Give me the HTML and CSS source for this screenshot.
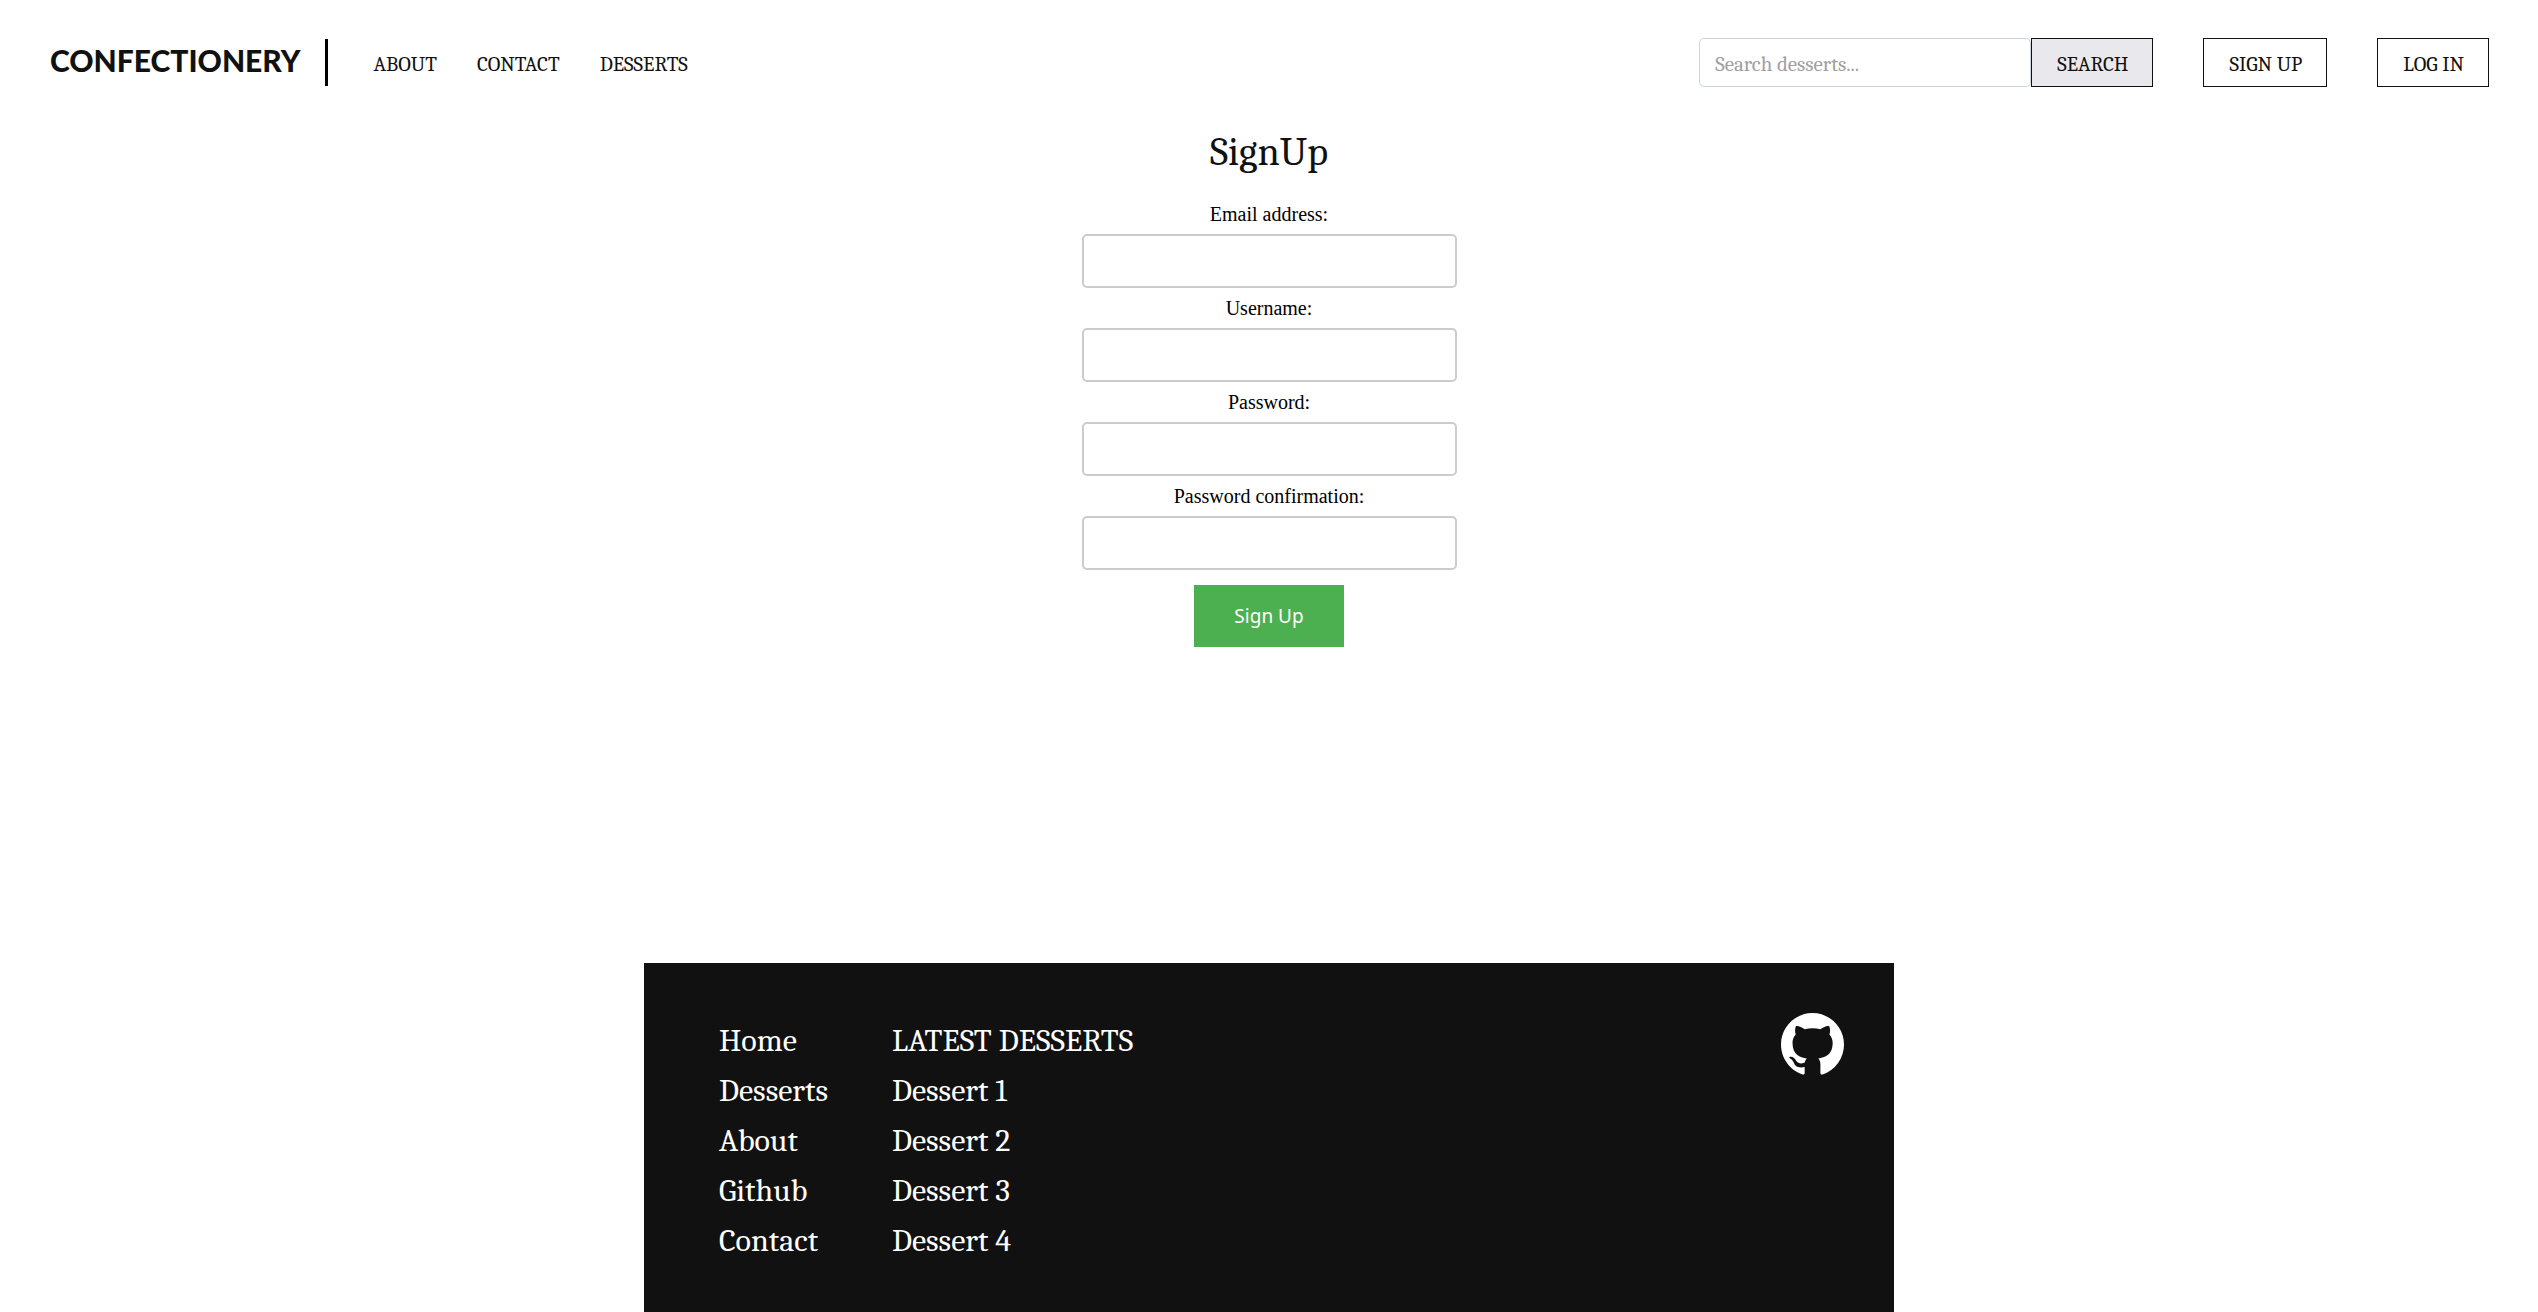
FILE: index.html
```html
<!DOCTYPE html>
<html lang="en">
<head>
<meta charset="utf-8">
<title>Confectionery</title>
<link rel="stylesheet" href="styles.css">
</head>
<body>
<header class="header">
  <a class="logo" href="#">CONFECTIONERY</a>
  <nav class="nav">
    <a href="#">ABOUT</a>
    <a href="#">CONTACT</a>
    <a href="#">DESSERTS</a>
  </nav>
  <div class="actions">
    <form class="search">
      <input class="search-input" type="text" placeholder="Search desserts..." aria-label="Search desserts">
      <button class="btn btn-search" type="button">SEARCH</button>
    </form>
    <button class="btn" type="button">SIGN UP</button>
    <button class="btn" type="button">LOG IN</button>
  </div>
</header>
<main class="main">
  <h1 class="title">SignUp</h1>
  <form class="signup">
    <label for="email">Email address:</label>
    <input id="email" type="email">
    <label for="username">Username:</label>
    <input id="username" type="text">
    <label for="password">Password:</label>
    <input id="password" type="password">
    <label for="confirm">Password confirmation:</label>
    <input id="confirm" type="password">
    <button class="submit" type="button">Sign Up</button>
  </form>
</main>
<footer class="footer">
  <ul class="links">
    <li><a href="#">Home</a></li>
    <li><a href="#">Desserts</a></li>
    <li><a href="#">About</a></li>
    <li><a href="#">Github</a></li>
    <li><a href="#">Contact</a></li>
  </ul>
  <ul class="links">
    <li>LATEST DESSERTS</li>
    <li><a href="#">Dessert 1</a></li>
    <li><a href="#">Dessert 2</a></li>
    <li><a href="#">Dessert 3</a></li>
    <li><a href="#">Dessert 4</a></li>
  </ul>
  <a class="github" href="#" aria-label="GitHub">
    <svg viewBox="0 0 16 16" width="63" height="63"><path fill="#fff" d="M8 0C3.58 0 0 3.58 0 8c0 3.54 2.29 6.53 5.47 7.59.4.07.55-.17.55-.38 0-.19-.01-.82-.01-1.49-2.01.37-2.53-.49-2.69-.94-.09-.23-.48-.94-.82-1.13-.28-.15-.68-.52-.01-.53.63-.01 1.08.58 1.23.82.72 1.21 1.87.87 2.33.66.07-.52.28-.87.51-1.07-1.78-.2-3.64-.89-3.64-3.95 0-.87.31-1.59.82-2.15-.08-.2-.36-1.02.08-2.12 0 0 .67-.21 2.2.82.64-.18 1.32-.27 2-.27s1.36.09 2 .27c1.53-1.04 2.2-.82 2.2-.82.44 1.1.16 1.92.08 2.12.51.56.82 1.27.82 2.15 0 3.07-1.87 3.75-3.65 3.95.29.25.54.73.54 1.48 0 1.07-.01 1.93-.01 2.2 0 .21.15.46.55.38A8.01 8.01 0 0 0 16 8c0-4.42-3.58-8-8-8z"/></svg>
  </a>
</footer>
</body>
</html>
```
FILE: styles.css
```css
* {
  box-sizing: border-box;
}

body {
  margin: 0;
  min-height: 100vh;
  display: flex;
  flex-direction: column;
  background: #fff;
  color: #111;
  font-family: Cambria, Caladea, "DejaVu Serif Condensed", "Liberation Serif", serif;
  font-size: 21px;
}

a {
  color: inherit;
  text-decoration: none;
}

.header {
  display: flex;
  align-items: center;
  padding: 38px 49px 38px 50px;
}

.logo {
  padding: 0 25px 5px 0;
  border-right: 3px solid #000;
  font-family: Lato, sans-serif;
  font-size: 30px;
  font-weight: 900;
  line-height: 42px;
}

.nav {
  display: flex;
  gap: 40px;
  margin-left: 45px;
  padding-top: 3px;
}

.actions {
  display: flex;
  gap: 50px;
  margin-left: auto;
}

.search {
  display: flex;
}

.search-input {
  width: 332px;
  padding: 3px 15px 0;
  border: 1px solid #ced4da;
  border-radius: 5px;
  font: inherit;
}

.search-input::placeholder {
  color: #a0a0a0;
}

.btn {
  height: 49px;
  padding: 3px 24px 0 25px;
  border: 1px solid #111;
  background: #fff;
  color: #111;
  font: inherit;
}

.btn-search {
  background: #e9e9ed;
}

.main {
  flex: 1;
}

.title {
  margin: 0 0 22px;
  font-size: 40px;
  font-weight: 400;
  line-height: 54px;
  text-align: center;
}

.signup {
  display: flex;
  flex-direction: column;
  align-items: center;
  color: #000;
  font-family: "Liberation Serif", serif;
  font-size: 20px;
}

.signup label {
  padding-top: 1px;
  line-height: 24px;
}

.signup input {
  width: 375px;
  height: 54px;
  margin: 8px 0 7px;
  padding: 0 15px;
  border: 2px solid #ccc;
  border-radius: 5px;
  font: inherit;
}

.submit {
  margin-top: 8px;
  height: 62px;
  padding: 0 40px;
  border: 0;
  background: #4caf50;
  color: #fff;
  font-family: "Noto Sans", sans-serif;
  font-size: 19px;
}

.footer {
  display: flex;
  gap: 64px;
  width: 100%;
  max-width: 1250px;
  margin: 0 auto;
  padding: 50px 50px 46px 75px;
  background: #111;
  color: #fff;
  font-size: 32px;
}

.links {
  margin: 0;
  padding: 3px 0 0;
  list-style: none;
  line-height: 50px;
}

.github {
  margin-left: auto;
}

.github svg {
  display: block;
}
```
